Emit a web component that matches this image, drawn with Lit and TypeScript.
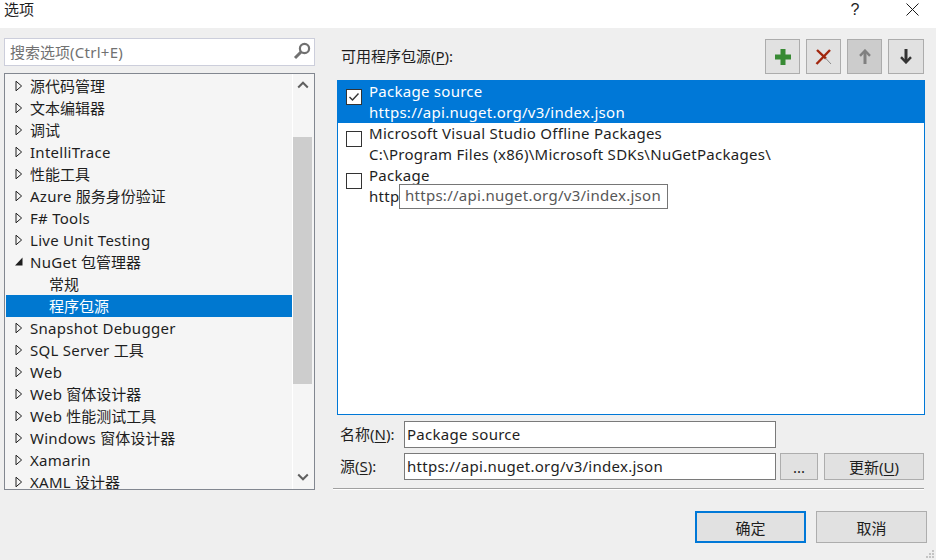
import { LitElement, html, css } from "lit";
import { customElement } from "lit/decorators.js";

const rows: [string, string][] = [
  ["c", "源代码管理"], ["c", "文本编辑器"], ["c", "调试"], ["c", "IntelliTrace"], ["c", "性能工具"],
  ["c", "Azure 服务身份验证"], ["c", "F# Tools"], ["c", "Live Unit Testing"], ["o", "NuGet 包管理器"],
  ["l", "常规"], ["s", "程序包源"], ["c", "Snapshot Debugger"], ["c", "SQL Server 工具"], ["c", "Web"],
  ["c", "Web 窗体设计器"], ["c", "Web 性能测试工具"], ["c", "Windows 窗体设计器"], ["c", "Xamarin"], ["c", "XAML 设计器"],
];

const sources = [
  { name: "Package source", url: "https://api.nuget.org/v3/index.json", sel: true },
  { name: "Microsoft Visual Studio Offline Packages", url: "C:\\Program Files (x86)\\Microsoft SDKs\\NuGetPackages\\", sel: false },
  { name: "Package", url: "http", sel: false },
];

/* Latin runs get slightly wider tracking; CJK runs keep their natural advance. */
const mixed = (t: string) =>
  t.split(/([\u4e00-\u9fff]+)/).filter(Boolean).map((p) =>
    /[\u4e00-\u9fff]/.test(p) ? html`<span>${p}</span>` : html`<span class="lat">${p}</span>`);

const closedArrow = html`<svg class="arrow" width="8" height="12" viewBox="0 0 8 12"><path d="M1 1.2 L6.6 6 L1 10.8 Z" fill="none" stroke="#1e1e1e" stroke-width="1"/></svg>`;
const openArrow = html`<svg class="arrow" width="8" height="12" viewBox="0 0 8 12"><path d="M7.5 1.5 V9.5 H0 Z" fill="#1e1e1e"/></svg>`;

@customElement("app-root")
export class AppRoot extends LitElement {
  static styles = css`
    :host { display: flex; flex-direction: column; width: 936px; height: 560px; overflow: hidden; background: #efefef;
      font-family: "Noto Sans", "Noto Sans CJK SC", sans-serif; font-size: 15px; color: #1e1e1e; position: relative; }
    .lat { letter-spacing: 0.27px; }
    .title { height: 28px; flex: none; background: #fff; display: flex; padding: 0 17px 0 4px; }
    .title .t { flex: 1; line-height: 19px; }
    .help { width: 14px; text-align: center; margin: 1px 44px 0 0; font-family: "Liberation Sans", sans-serif; font-size: 16px; line-height: 17px; }
    .x { margin-top: 3px; }
    .body { flex: 1; display: flex; min-height: 0; }
    .left { width: 311px; margin-left: 4px; padding-top: 10px; display: flex; flex-direction: column; gap: 7px; flex: none; }
    .search { height: 28px; box-sizing: border-box; border: 1px solid #ccceDB; background: #fff; display: flex; align-items: center; padding: 0 3px 2px 5px; color: #717171; }
    .search span { flex: 1; }
    .tree { height: 417px; box-sizing: border-box; border: 1px solid #828790; background: #f5f5f5; display: flex; overflow: hidden; }
    .rows { flex: 1; padding: 1px 0 0 1px; min-width: 0; overflow: hidden; }
    .row { height: 22px; display: flex; align-items: center; white-space: nowrap; line-height: 22px; }
    .row .arrow { margin-left: 9px; margin-right: 7px; flex: none; }
    .row.l { padding-left: 43px; }
    .row.s { padding-left: 43px; background: #0078d0; color: #fff; }
    .sb { width: 19px; border-left: 1px solid #fff; padding-right: 2px; flex: none; display: flex; flex-direction: column; }
    .sb .btn { height: 63px; display: flex; justify-content: center; padding-top: 5px; box-sizing: border-box; }
    .sb .btn.b { align-items: flex-end; padding: 0 0 6px; height: 105px; }
    .thumb { height: 247px; background: #cdcdcd; }
    .right { width: 594px; margin-left: 18px; display: flex; flex-direction: column; flex: none; }
    .head { height: 52px; box-sizing: border-box; padding: 11px 3px 0 8px; display: flex; gap: 6px; }
    .head .lbl { flex: 1; padding-top: 6px; line-height: 22px; }
    .tb { width: 35px; height: 35px; box-sizing: border-box; border: 1px solid #acacac; background: #e1e1e1; display: flex; align-items: center; justify-content: center; }
    .tb.dis { background: #ccc; }
    .tb.w { width: 36px; }
    u { text-decoration: underline; text-underline-offset: 2px; }
    .list { margin-left: 4px; width: 588px; height: 335px; box-sizing: border-box; border: 1px solid #0078d7; background: #fff; position: relative; flex: none; }
    .item { height: 42px; display: flex; padding-left: 8px; gap: 7px; line-height: 21px; white-space: nowrap; }
    .item.sel { background: #0078d7; color: #fff; height: 42px; margin: -1px -1px 0 -1px; padding: 1px 0 0 9px; }
    .cb { width: 16px; height: 16px; box-sizing: border-box; border: 1px solid #333; background: #fff; flex: none; margin-top: 8px; display: flex; align-items: center; justify-content: center; }
    .tip { position: absolute; left: 61px; top: 103px; width: 269px; height: 25px; box-sizing: border-box; border: 1px solid #767676; background: #fff; color: #575757; padding-left: 5px; line-height: 21px; white-space: nowrap; }
    .form { display: grid; grid-template-columns: 71px 372px 42px 106px; margin-top: 6px; row-gap: 5px; }
    .form label { padding-left: 7px; line-height: 27px; white-space: nowrap; }
    .field { height: 27px; box-sizing: border-box; border: 1px solid #7a7a7a; background: #fff; line-height: 24px; padding-left: 2px; white-space: nowrap; }
    .btn2 { height: 27px; box-sizing: border-box; border: 1px solid #adadad; background: #e1e1e1; display: flex; align-items: center; justify-content: center; white-space: nowrap; }
    .dots { margin-left: 4px; width: 38px; }
    .upd { margin-left: 6px; width: 100px; }
    .divider { height: 1px; background: #a0a0a0; border-bottom: 1px solid #fff; margin-top: 8px; width: 591px; }
    .foot { display: flex; justify-content: flex-end; gap: 10px; margin-top: 21px; }
    .big { width: 111px; height: 32px; box-sizing: border-box; border: 1px solid #adadad; background: #e1e1e1; display: flex; align-items: center; justify-content: center; }
    .big.def { border: 2px solid #0078d7; }
    .grip { position: absolute; right: 2px; bottom: 2px; }
  `;

  render() {
    return html`
      <div class="title">
        <span class="t">选项</span>
        <span class="help">?</span>
        <svg class="x" width="13" height="13" viewBox="0 0 13 13"><path d="M0.5 0.5 L12.5 12.5 M12.5 0.5 L0.5 12.5" stroke="#1a1a1a" stroke-width="1" fill="none"/></svg>
      </div>
      <div class="body">
        <div class="left">
          <div class="search">
            <span>搜索选项<span class="lat">(Ctrl+E)</span></span>
            <svg width="18" height="18" viewBox="0 0 18 18"><circle cx="11.5" cy="6.5" r="4.6" fill="none" stroke="#717171" stroke-width="2.2"/><path d="M8 10 L2 16" stroke="#717171" stroke-width="3"/></svg>
          </div>
          <div class="tree">
            <div class="rows">
              ${rows.map(([k, t]) => html`<div class="row ${k}">${k === "c" ? closedArrow : k === "o" ? openArrow : ""}<span>${mixed(t)}</span></div>`)}
            </div>
            <div class="sb">
              <div class="btn"><svg width="12" height="12" viewBox="0 0 12 12"><path d="M1.2 8.5 L6 3.7 L10.8 8.5" fill="none" stroke="#606060" stroke-width="2"/></svg></div>
              <div class="thumb"></div>
              <div class="btn b"><svg width="12" height="12" viewBox="0 0 12 12"><path d="M1.2 3.5 L6 8.3 L10.8 3.5" fill="none" stroke="#606060" stroke-width="2"/></svg></div>
            </div>
          </div>
        </div>
        <div class="right">
          <div class="head">
            <span class="lbl">可用程序包源(<u>P</u>):</span>
            <div class="tb"><svg width="16" height="16" viewBox="0 0 16 16"><path d="M5.5 0 H10.5 V5.5 H16 V10.5 H10.5 V16 H5.5 V10.5 H0 V5.5 H5.5 Z" fill="#388a34"/></svg></div>
            <div class="tb"><svg width="17" height="16" viewBox="0 0 17 16"><path d="M2 1 L11 9.6" stroke="#a1260d" stroke-width="2.4" fill="none"/><path d="M10.6 9.2 L16 15" stroke="#8a8a8a" stroke-width="1" fill="none"/><path d="M15 1 L1.5 15" stroke="#a1260d" stroke-width="2.4" fill="none"/></svg></div>
            <div class="tb dis"><svg width="12" height="15" viewBox="0 0 12 15"><path d="M6 2 V15" stroke="#808080" stroke-width="3" fill="none"/><path d="M1 6.8 L6 1.6 L11 6.8" stroke="#808080" stroke-width="2.4" fill="none"/></svg></div>
            <div class="tb w"><svg width="12" height="15" viewBox="0 0 12 15"><path d="M6 0 V13" stroke="#333" stroke-width="3" fill="none"/><path d="M1 8.2 L6 13.4 L11 8.2" stroke="#333" stroke-width="2.4" fill="none"/></svg></div>
          </div>
          <div class="list">
            ${sources.map((s) => html`
              <div class="item ${s.sel ? "sel" : ""}">
                <div class="cb">${s.sel ? html`<svg width="12" height="10" viewBox="0 0 12 10"><path d="M1.5 5 L4.5 8 L10.5 1.5" fill="none" stroke="#333" stroke-width="1.4"/></svg>` : ""}</div>
                <div class="lat">${s.name}<br />${s.url}</div>
              </div>`)}
            <div class="tip lat">https://api.nuget.org/v3/index.json</div>
          </div>
          <div class="form">
            <label>名称(<u>N</u>):</label>
            <div class="field lat">Package source</div>
            <div></div><div></div>
            <label>源(<u>S</u>):</label>
            <div class="field lat">https://api.nuget.org/v3/index.json</div>
            <div class="btn2 dots">...</div>
            <div class="btn2 upd">更新(<u>U</u>)</div>
          </div>
          <div class="divider"></div>
          <div class="foot">
            <div class="big def">确定</div>
            <div class="big">取消</div>
          </div>
        </div>
      </div>
      <svg class="grip" width="8" height="8" viewBox="0 0 8 8" fill="#c4c4c4"><rect x="6" y="0" width="2" height="2"/><rect x="3" y="3" width="2" height="2"/><rect x="6" y="3" width="2" height="2"/><rect x="0" y="6" width="2" height="2"/><rect x="3" y="6" width="2" height="2"/><rect x="6" y="6" width="2" height="2"/></svg>
    `;
  }
}
